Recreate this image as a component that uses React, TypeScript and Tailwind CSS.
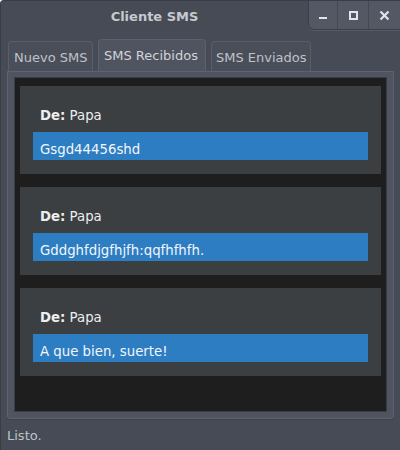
import React from 'react';

const messages = [
  { from: 'Papa', body: 'Gsgd44456shd' },
  { from: 'Papa', body: 'Gddghfdjgfhjfh:qqfhfhfh.' },
  { from: 'Papa', body: 'A que bien, suerte!' },
];

const font = { fontFamily: '"DejaVu Sans", "Noto Sans", sans-serif' };

export default function App() {
  return (
    <div
      className="w-[400px] h-[450px] bg-[#474b56] rounded-tl-[4px] border-l border-t border-[#3a3d46] flex flex-col overflow-hidden"
      style={font}
    >
      {/* Title bar */}
      <div className="h-[30px] flex">
        <div className="flex-1 flex items-center justify-center pt-[2px] text-[13px] font-bold text-[#c6c9ce]">
          Cliente SMS
        </div>
        <div className="flex h-[29px] bg-[#545864] rounded-bl-[6px] border-l border-b border-[#3c3f48] shadow-[0_1px_0_#575b66]">
          <button className="w-[29px] flex items-end justify-center pb-[10px] border-r border-[#454852]">
            <span className="block w-[8px] h-[2px] bg-[#e2e4e8]"></span>
          </button>
          <button className="w-[31px] flex items-center justify-center border-r border-[#454852]">
            <span className="block w-[9px] h-[9px] border-2 border-[#e2e4e8]"></span>
          </button>
          <button className="w-[31px] flex items-center justify-center">
            <svg width="11" height="11" viewBox="0 0 11 11">
              <path d="M1.5 1.5 L9.5 9.5 M9.5 1.5 L1.5 9.5" stroke="#e2e4e8" strokeWidth="2.2" />
            </svg>
          </button>
        </div>
      </div>

      {/* Tabs */}
      <div className="flex items-end gap-[5px] pl-[7px] h-[40px]">
        <div className="h-[30px] w-[85px] pl-[5px] pt-[3px] flex items-center rounded-t-[4px] border border-b-0 border-[#5a5e69] bg-[#4a4e59] text-[13px] text-[#bfc2c8]">
          Nuevo SMS
        </div>
        <div className="h-[32px] w-[108px] pl-[5px] pt-[1px] flex items-center rounded-t-[4px] border border-b-0 border-[#5d616c] bg-[#505460] text-[13px] text-[#d0d3d8]">
          SMS Recibidos
        </div>
        <div className="h-[30px] w-[100px] pl-[4px] pt-[3px] flex items-center rounded-t-[4px] border border-b-0 border-[#5a5e69] bg-[#4a4e59] text-[13px] text-[#bfc2c8]">
          SMS Enviados
        </div>
      </div>

      {/* Notebook page */}
      <div className="mx-[6px] h-[348px] rounded-b-[3px] border border-[#5f636e] bg-[#505460] p-[6px] pt-[5px] shadow-[0_1px_0_#3e414a]">
        <div className="h-full bg-[#1e1e1e] border border-[#3a3d45] px-[5px] pt-[8px] flex flex-col gap-[13px]">
          {messages.map((m, i) => (
            <div key={i} className="h-[88px] bg-[#3c3f42] px-[13px] pt-[21px]">
              <div className="pl-[7px] text-[13.3px] text-[#eeeeee] leading-[18px]">
                <span className="font-bold">De:</span> {m.from}
              </div>
              <div className="mt-[7px] h-[28px] bg-[#2d7dc3] px-[7px] flex items-center pt-[8px] text-[13.3px] text-[#f2f6fa]">
                {m.body}
              </div>
            </div>
          ))}
        </div>
      </div>

      {/* Status bar */}
      <div className="flex-1 flex items-center px-[6px] pt-[3px] text-[13px] text-[#bfc2c8]">Listo.</div>
    </div>
  );
}
